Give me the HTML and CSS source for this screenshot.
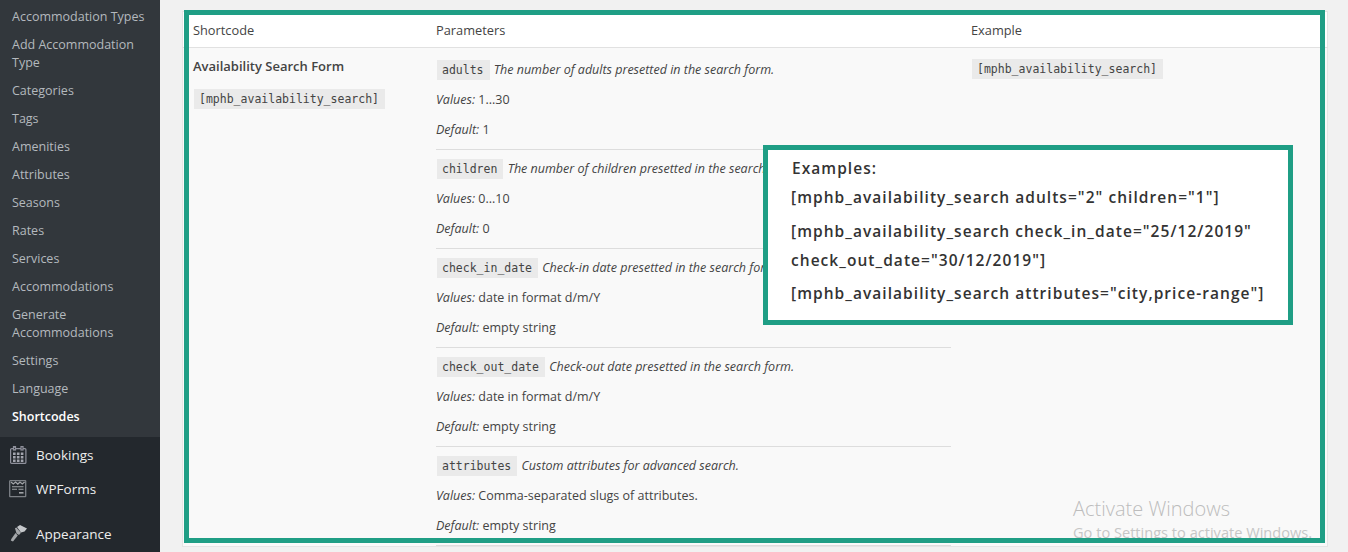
FILE: index.html
```html
<!DOCTYPE html>
<html lang="en">
<head>
    <meta charset="UTF-8">
    <meta name="viewport" content="width=device-width, initial-scale=1.0">
    <title>Shortcodes</title>
    <link rel="stylesheet" href="styles.css">
</head>
<body>
    <nav class="sidebar">
        <ul class="submenu">
            <li>Accommodation Types</li>
            <li>Add Accommodation Type</li>
            <li>Categories</li>
            <li>Tags</li>
            <li>Amenities</li>
            <li>Attributes</li>
            <li>Seasons</li>
            <li>Rates</li>
            <li>Services</li>
            <li>Accommodations</li>
            <li>Generate Accommodations</li>
            <li>Settings</li>
            <li>Language</li>
            <li class="current">Shortcodes</li>
        </ul>
        <ul class="menu">
            <li>
                <svg class="menu-icon" viewBox="0 0 18 18" fill="none" stroke="#8f919c" stroke-width="1.200">
                    <rect x="1.600" y="2.600" width="15.300" height="14.800" rx="1"/>
                    <rect x="4.500" y="0.600" width="2" height="3.400" fill="#23282d"/>
                    <rect x="12" y="0.600" width="2" height="3.400" fill="#23282d"/>
                    <path stroke="none" fill="#a3a5ae" d="M4 6.500h2.600v2.500H4zm3.900 0h2.600v2.500H7.900zm3.900 0h2.600v2.500h-2.600zM4 10h2.600v2.500H4zm3.900 0h2.600v2.500H7.900zm3.900 0h2.600v2.500h-2.600zM4 13.500h2.600V16H4zm3.900 0h2.600V16H7.900zm3.900 0h2.600V16h-2.600z"/>
                </svg>
                Bookings
            </li>
            <li>
                <svg class="menu-icon" viewBox="0 0 18 18" fill="none" stroke="#7d8186" stroke-width="1.300">
                    <rect x="0.700" y="0.700" width="16" height="16" rx="0.500"/>
                    <path stroke="#a0a3a7" d="M2 2l2.300 2 2.300-2 2.200 2 2.200-2 2.300 2 2.300-2"/>
                    <path stroke="#a0a3a7" stroke-width="1.100" d="M3 6.800h11.500M3 9.300h5M9.500 9.300h5"/>
                    <path stroke="#a0a3a7" stroke-width="1.600" d="M10 12.800h4.500"/>
                </svg>
                WPForms
            </li>
            <li class="menu-gap">
                <svg class="menu-icon" viewBox="0 0 18 18">
                    <path fill="#c4c7ca" d="M8 2 11 0 18 3.500 15.500 6.500 12 7.500z"/>
                    <path fill="#a4a7aa" d="M6 3.200 7.400 2.400 12 7.800 10 10 7.500 8.600z"/>
                    <path fill="#a4a7aa" d="M6.500 8 8.800 10.400 4 16.500 1.800 15.500 2.300 14z"/>
                </svg>
                Appearance
            </li>
        </ul>
    </nav>

    <main class="content">
        <table class="shortcodes">
            <thead>
                <tr>
                    <th class="col-code">Shortcode</th>
                    <th class="col-params">Parameters</th>
                    <th>Example</th>
                </tr>
            </thead>
            <tbody>
                <tr>
                    <td>
                        <p class="form-name">Availability Search Form</p>
                        <code>[mphb_availability_search]</code>
                    </td>
                    <td class="params">
                        <div class="param">
                            <p><code>adults</code> <em>The number of adults presetted in the search form.</em></p>
                            <p><em>Values:</em> 1...30</p>
                            <p><em>Default:</em> 1</p>
                        </div>
                        <div class="param">
                            <p><code>children</code> <em>The number of children presetted in the search form.</em></p>
                            <p><em>Values:</em> 0...10</p>
                            <p><em>Default:</em> 0</p>
                        </div>
                        <div class="param">
                            <p><code>check_in_date</code> <em>Check-in date presetted in the search form.</em></p>
                            <p><em>Values:</em> date in format d/m/Y</p>
                            <p><em>Default:</em> empty string</p>
                        </div>
                        <div class="param">
                            <p><code>check_out_date</code> <em>Check-out date presetted in the search form.</em></p>
                            <p><em>Values:</em> date in format d/m/Y</p>
                            <p><em>Default:</em> empty string</p>
                        </div>
                        <div class="param">
                            <p><code>attributes</code> <em>Custom attributes for advanced search.</em></p>
                            <p><em>Values:</em> Comma-separated slugs of attributes.</p>
                            <p><em>Default:</em> empty string</p>
                        </div>
                    </td>
                    <td class="example"><code>[mphb_availability_search]</code></td>
                </tr>
            </tbody>
        </table>

        <div class="watermark">
            <div class="watermark-title">Activate Windows</div>
            <div>Go to Settings to activate Windows.</div>
        </div>
        <div class="frame"></div>
        <div class="callout">
            <p class="callout-title">Examples:</p>
            <p class="callout-line1">[mphb_availability_search adults="2" children="1"]</p>
            <p class="callout-line2">[mphb_availability_search check_in_date="25/12/2019"</p>
            <p class="callout-line3">check_out_date="30/12/2019"]</p>
            <p class="callout-line4">[mphb_availability_search attributes="city,price-range"]</p>
        </div>
    </main>
</body>
</html>
```

FILE: styles.css
```css
html, body {
    height: 100%;
}
body {
    font-family: 'Open Sans', sans-serif;
    font-size: 12.5px;
    background-color: #f1f1f1;
    color: #444;
    margin: 0;
    display: flex;
    height: 552px;
    overflow: hidden;
}
ul {
    list-style: none;
    margin: 0;
    padding: 0;
}
p {
    margin: 0;
}

/* admin sidebar */
.sidebar {
    width: 160px;
    flex-shrink: 0;
    background-color: #23282d;
}
.submenu {
    background-color: #32373c;
    padding: 3px 0 6px;
    color: #b4b9be;
}
.submenu li {
    padding: 5px 12px;
    line-height: 18px;
}
.submenu .current {
    color: #fff;
    font-weight: 600;
}
.menu {
    color: #eee;
    font-size: 13.5px;
    padding-top: 1px;
}
.menu li {
    display: flex;
    align-items: center;
    height: 34px;
    padding-left: 9px;
    gap: 9px;
}
.menu .menu-gap {
    margin-top: 11px;
}
.menu-icon {
    width: 18px;
    height: 18px;
}

/* table */
.content {
    position: relative;
    flex: 1;
    padding: 11px 20px 0 22px;
}
.shortcodes {
    width: 1146px;
    border-collapse: collapse;
    table-layout: fixed;
    background-color: #f9f9f9;
    border: 1px solid #e5e5e5;
}
.shortcodes th {
    background-color: #fff;
    font-size: 12.8px;
    font-weight: 400;
    text-align: left;
    height: 36px;
    padding: 0 10px;
    box-sizing: border-box;
    border-bottom: 1px solid #e1e1e1;
}
.shortcodes td {
    vertical-align: top;
    padding: 0 10px;
}
.col-code {
    width: 243.5px;
}
.col-params {
    width: 535px;
}
.form-name {
    font-size: 13px;
    font-weight: 600;
    margin: 8px 0 14px;
    line-height: 20px;
}
code {
    font-family: 'DejaVu Sans Mono', monospace;
    font-size: 11.5px;
    background-color: #eaeaea;
    padding: 3px 6px 3px 5px;
    margin: 0 1px;
}
.shortcodes .params {
    padding-top: 3px;
}
.param {
    padding: 9px 0 9px;
    border-bottom: 1px solid #ddd;
}
.param p {
    height: 20px;
    line-height: 20px;
    margin-top: 10px;
}
.param p:first-child {
    margin-top: 0;
}
.param code {
    margin-left: 1px;
}
.shortcodes .example {
    padding-top: 12px;
}

/* green highlight frame, drawn on top of the page */
.frame {
    position: absolute;
    left: 24px;
    top: 10px;
    width: 1131px;
    height: 523px;
    border: 5px solid #1f9e85;
}
.callout {
    position: absolute;
    left: 603px;
    top: 145px;
    width: 497px;
    height: 170px;
    background-color: #fff;
    border: 5px solid #1f9e85;
    color: #333;
    font-size: 15.5px;
    font-weight: 600;
    letter-spacing: 1.05px;
    white-space: nowrap;
    padding-left: 23px;
}
.callout p {
    line-height: 20px;
}
.callout-title {
    margin-top: 8px;
    margin-left: 1px;
}
.callout-line1 {
    margin-top: 9px;
}
.callout-line2 {
    margin-top: 14px;
}
.callout-line3 {
    margin-top: 9px;
}
.callout-line4 {
    margin-top: 13px;
}
.watermark {
    position: absolute;
    left: 913px;
    top: 496px;
    color: #c6c6c6;
    font-size: 14.6px;
    line-height: 20px;
    white-space: nowrap;
}
.watermark-title {
    font-size: 20px;
    font-weight: 300;
    line-height: 26px;
    color: #bdbdbd;
}
```
